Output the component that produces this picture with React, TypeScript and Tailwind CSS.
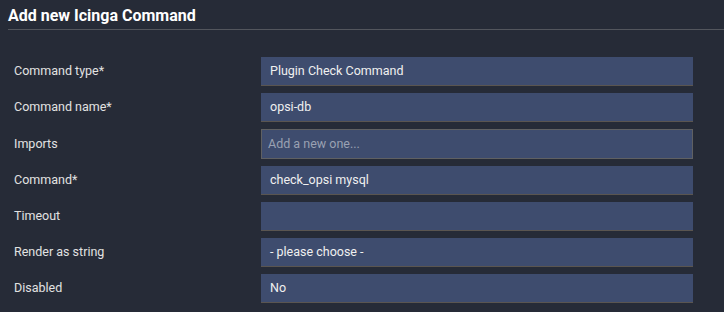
const rows: { label: string; value?: string; placeholder?: string; kind?: "input" | "select" }[] = [
  { label: "Command type*", value: "Plugin Check Command" },
  { label: "Command name*", value: "opsi-db" },
  { label: "Imports", placeholder: "Add a new one...", kind: "input" },
  { label: "Command*", value: "check_opsi mysql" },
  { label: "Timeout", value: "" },
  { label: "Render as string", value: "- please choose -" },
  { label: "Disabled", value: "No" },
];

export default function App() {
  return (
    <div className="h-[312px] w-[724px] overflow-hidden bg-[#262b37] pl-2 font-['Roboto',sans-serif]">
      <h1 className="h-[30px] border-b border-[#53565d] pt-[6px] text-[16px] font-bold leading-[20px] text-white">
        Add new Icinga Command
      </h1>
      <form className="mt-[27px] pl-[6px]">
        {rows.map((row) =>
          row.kind === "input" ? (
            <div key={row.label} className="mb-[7px] flex h-[30px] items-center">
              <label className="w-[247px] text-[12.5px] text-[#e2e2e2]">{row.label}</label>
              <div className="flex h-[30px] w-[432px] items-center border border-[#5f6062] bg-[#3e4c6e] pl-[6px] text-[12.5px] text-[#9aa1b2]">
                {row.placeholder}
              </div>
            </div>
          ) : (
            <div key={row.label} className="mb-[7px] flex h-[29px] items-center">
              <label className="w-[247px] text-[12.5px] text-[#e2e2e2]">{row.label}</label>
              <div className="flex h-[29px] w-[432px] items-center border-b border-[#5a5550] bg-[#3e4c6e] pl-[9px] text-[12.5px] text-[#f0f0f0]">
                {row.value}
              </div>
            </div>
          )
        )}
      </form>
    </div>
  );
}
